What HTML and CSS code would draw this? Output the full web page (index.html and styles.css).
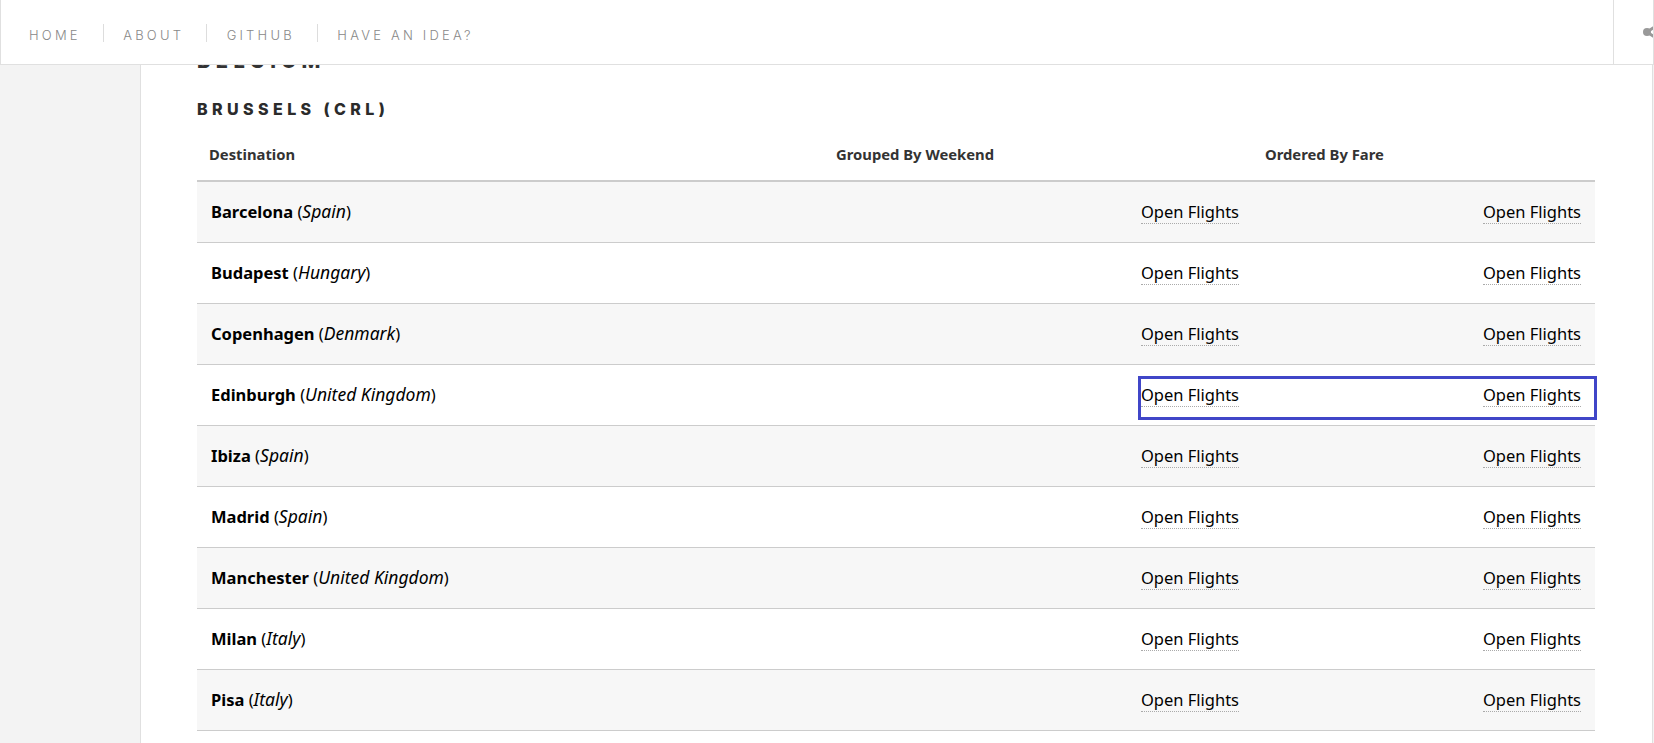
FILE: index.html
```html
<!DOCTYPE html>
<html lang="en">
<head>
<meta charset="utf-8">
<title>Flights</title>
<link rel="stylesheet" href="styles.css">
</head>
<body>
<header class="topbar">
  <nav class="menu">
    <a href="#">HOME</a>
    <a href="#">ABOUT</a>
    <a href="#">GITHUB</a>
    <a href="#">HAVE AN IDEA?</a>
  </nav>
  <div class="share">
    <svg viewBox="0 0 24 24" width="24" height="24"><path class="share-lines" d="M5 12L17 4M5 12L17 20"/><circle cx="5" cy="12" r="4"/><circle cx="18" cy="5" r="4"/><circle cx="18" cy="19" r="4"/></svg>
  </div>
</header>
<div class="layout">
  <aside class="gutter"></aside>
  <main class="content">
    <h2 class="country">BELGIUM</h2>
    <h3 class="city">BRUSSELS (CRL)</h3>
    <div class="table-wrap">
      <table>
        <thead>
          <tr><th class="c1">Destination</th><th class="c2">Grouped By Weekend</th><th class="c3">Ordered By Fare</th></tr>
        </thead>
        <tbody>
          <tr><td><b>Barcelona</b> (<i>Spain</i>)</td><td class="link"><a href="#">Open Flights</a></td><td class="link"><a href="#">Open Flights</a></td></tr>
          <tr><td><b>Budapest</b> (<i>Hungary</i>)</td><td class="link"><a href="#">Open Flights</a></td><td class="link"><a href="#">Open Flights</a></td></tr>
          <tr><td><b>Copenhagen</b> (<i>Denmark</i>)</td><td class="link"><a href="#">Open Flights</a></td><td class="link"><a href="#">Open Flights</a></td></tr>
          <tr><td><b>Edinburgh</b> (<i>United Kingdom</i>)</td><td class="link"><a href="#">Open Flights</a></td><td class="link"><a href="#">Open Flights</a></td></tr>
          <tr><td><b>Ibiza</b> (<i>Spain</i>)</td><td class="link"><a href="#">Open Flights</a></td><td class="link"><a href="#">Open Flights</a></td></tr>
          <tr><td><b>Madrid</b> (<i>Spain</i>)</td><td class="link"><a href="#">Open Flights</a></td><td class="link"><a href="#">Open Flights</a></td></tr>
          <tr><td><b>Manchester</b> (<i>United Kingdom</i>)</td><td class="link"><a href="#">Open Flights</a></td><td class="link"><a href="#">Open Flights</a></td></tr>
          <tr><td><b>Milan</b> (<i>Italy</i>)</td><td class="link"><a href="#">Open Flights</a></td><td class="link"><a href="#">Open Flights</a></td></tr>
          <tr><td><b>Pisa</b> (<i>Italy</i>)</td><td class="link"><a href="#">Open Flights</a></td><td class="link"><a href="#">Open Flights</a></td></tr>
          <tr><td>&nbsp;</td><td></td><td></td></tr>
        </tbody>
      </table>
      <div class="focus-box"></div>
    </div>
  </main>
</div>
</body>
</html>
```
FILE: styles.css
```css
* { box-sizing: border-box; }
html, body { margin: 0; height: 100%; overflow: hidden; }
body {
  background: #f3f3f3;
  font-family: "Noto Sans", sans-serif;
  color: #000;
}
.topbar {
  position: absolute;
  top: 0; left: 0; right: 0;
  height: 65px;
  background: #fff;
  border: 1px solid #e0e0e0;
  border-top: 0;
  display: flex;
  justify-content: space-between;
  z-index: 2;
}
.menu { display: flex; align-items: center; padding: 2px 0 0 28px; }
.menu a {
  font-family: Inter, sans-serif;
  font-weight: 300;
  font-size: 13px;
  letter-spacing: 3.2px;
  color: #888;
  text-decoration: none;
  height: 18px;
  line-height: 22px;
  padding-right: 22px;
  margin-right: 19.5px;
  border-right: 1px solid #ddd;
  display: block;
}
.menu a:last-child { border-right: 0; }
.share {
  width: 40px;
  border-left: 1px solid #e0e0e0;
  padding: 20px 0 0 28px;
  overflow: hidden;
}
.share svg { display: block; fill: #999; }
.share-lines { stroke: #999; stroke-width: 3; fill: none; }
.layout { display: flex; height: 100%; }
.gutter { width: 140px; flex: none; }
.content {
  flex: 1;
  background: #fff;
  border-left: 1px solid #e0e0e0;
  border-right: 1px solid #e0e0e0;
  margin-right: 1px;
  padding: 51px 57px 0 56px;
  overflow: hidden;
}
.country {
  margin: 0;
  font-family: Inter, sans-serif;
  font-weight: 800;
  font-size: 20px;
  line-height: 20px;
  letter-spacing: 5.5px;
  color: #333;
}
.city {
  margin: 29px 0 0;
  font-family: Inter, sans-serif;
  font-weight: 800;
  font-size: 16px;
  line-height: 18px;
  letter-spacing: 4.4px;
  color: #2b2b2b;
}
.table-wrap { position: relative; margin-top: 11px; }
table { width: 100%; border-collapse: collapse; table-layout: fixed; }
.c1 { width: 625px; }
.c2 { width: 431px; }
th {
  text-align: left;
  font-size: 14.8px;
  font-weight: 700;
  color: #333;
  height: 52px;
  padding: 0 12px 1px;
  border-bottom: 2px solid #ccc;
}
th.c2 { padding-left: 14px; }
td {
  height: 61px;
  padding: 0 14px;
  font-size: 16.5px;
  line-height: 22px;
  border-bottom: 1px solid #ccc;
  white-space: nowrap;
}
tbody tr:nth-child(odd) td { background: #f7f7f7; }
tbody tr:last-child td { background: #fff; border-bottom: 0; }
td.link { text-align: right; }
td a {
  color: #000;
  text-decoration: none;
  border-bottom: 1px dotted #aaa;
}
b { font-weight: 700; }
i { font-size: 17.5px; line-height: 1; }
.focus-box {
  position: absolute;
  left: 941px;
  top: 247px;
  width: 459px;
  height: 44px;
  border: 3px solid #4046c8;
  pointer-events: none;
}
```
